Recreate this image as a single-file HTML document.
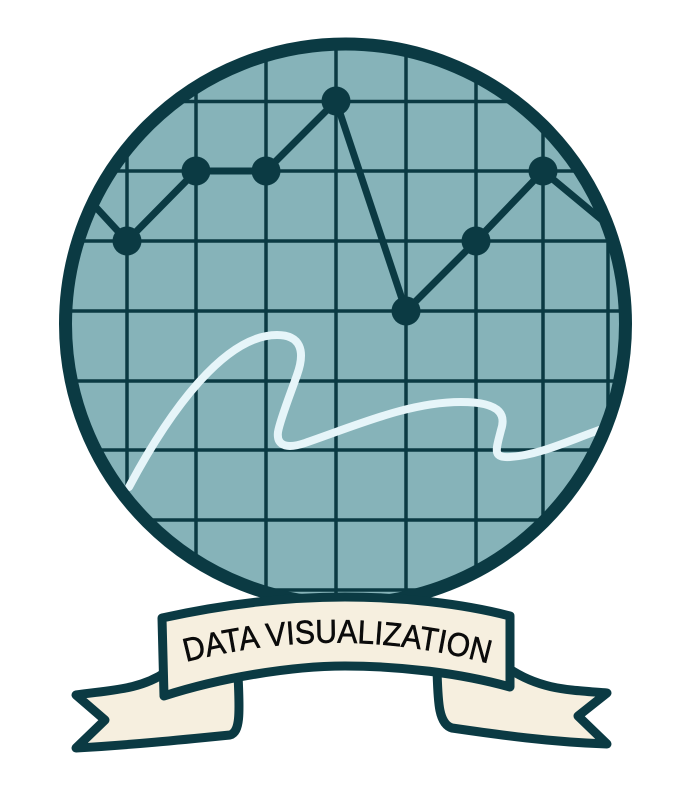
<!DOCTYPE html>
<html><head><meta charset="utf-8"><style>html,body{margin:0;padding:0;background:#fff}svg{display:block}</style></head>
<body>
<svg width="686" height="811" viewBox="0 0 686 811" xmlns="http://www.w3.org/2000/svg">
<defs><clipPath id="c"><circle cx="345.5" cy="324" r="280"/></clipPath></defs>
<circle cx="345.5" cy="324" r="280" fill="#86b3b9"/>
<g clip-path="url(#c)" stroke="#0b3a43" stroke-width="3.5" fill="none">
<path d="M127 0V700M196 0V700M266 0V700M336 0V700M406 0V700M476 0V700M543 0V700M608 0V700"/>
<path d="M0 101.5H700M0 171H700M0 241H700M0 311H700M0 381H700M0 450H700M0 520H700M0 590H700"/>
<polyline points="80,190 127,241 196,171 266,171 336,101 406,311 476,241 543,171 620,235" stroke-width="7" stroke-linejoin="round"/>
<g fill="#0b3a43" stroke="none">
<circle cx="127" cy="241" r="14.5"/><circle cx="196" cy="171" r="14.5"/><circle cx="266" cy="171" r="14.5"/><circle cx="336" cy="101" r="14.5"/><circle cx="406" cy="311" r="14.5"/><circle cx="476" cy="241" r="14.5"/><circle cx="543" cy="171" r="14.5"/>
</g>
<path d="M129 487C170 410 225 335 277 335C300 335 306 350 297 375C290 395 280 420 278 432C276 448 290 448 305 443C360 424 410 402 461 402C505 402 505 418 501 430C496 450 492 458 510 457C540 455 570 440 605 428" stroke="#e6f5f9" stroke-width="8" stroke-linecap="round"/>
</g>
<circle cx="345.5" cy="324" r="280" fill="none" stroke="#0b3a43" stroke-width="13"/>
<g stroke="#0b3a43" stroke-width="9" stroke-linejoin="round" fill="#f6efdf">
<path d="M166 672C140 690 110 690 76 695L105 720L76 748C130 745 180 740 230 735C240 732 240 715 238 675Z"/>
<path d="M508 668C540 690 570 690 607 693L578 716L607 744C550 742 500 735 452 728C438 724 438 700 437 670Z"/>
<path d="M162 618C230 603 290 597 345 597C400 597 460 603 510 616L510 687C460 673 400 666 345 666C290 666 220 678 164 696Z"/>
</g>
<path id="tp" d="M186 662Q340 622 494 665" fill="none"/>
<text font-family="Liberation Sans, sans-serif" font-size="33" fill="#0b0b0b" stroke="#0b0b0b" stroke-width="0.6"><textPath href="#tp" textLength="306" lengthAdjust="spacingAndGlyphs">DATA VISUALIZATION</textPath></text>
</svg>
</body></html>
